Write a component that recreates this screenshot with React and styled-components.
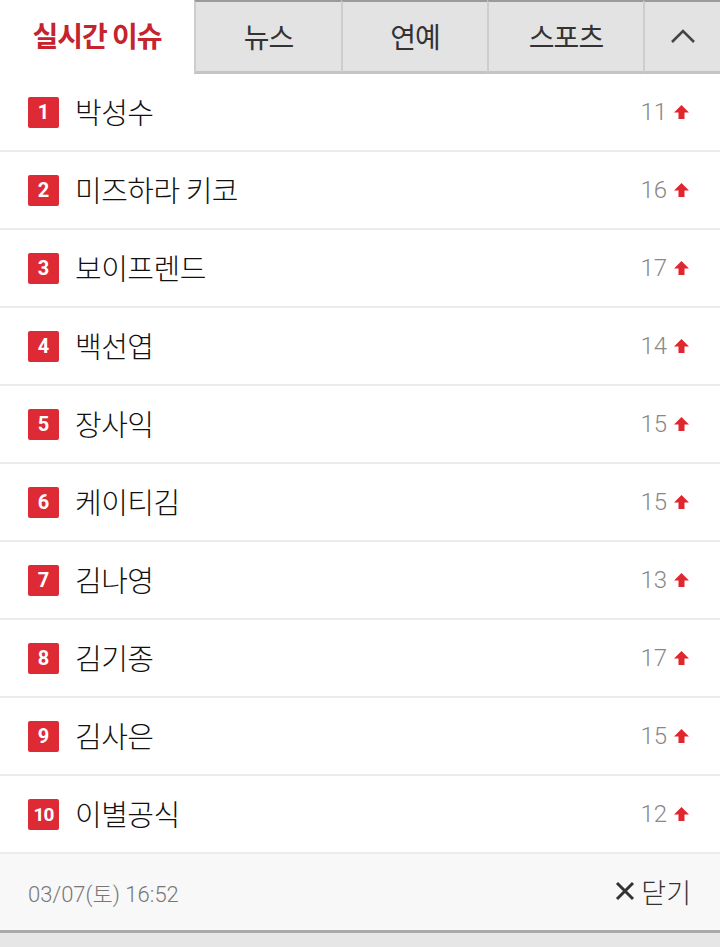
import React from 'react'
import styled, { createGlobalStyle } from 'styled-components'

const GlobalStyle = createGlobalStyle`
    html, body {
        margin: 0;
        padding: 0;
        background: #e6e6e6;
        font-family: "Noto Sans CJK KR", "Noto Sans", Roboto, sans-serif;
    }
`;

const Panel = styled.div`
    width: 720px;
    background: #fff;
    border-bottom: 3px solid #a9a9a9;
`;

const TabBar = styled.div`
    display: flex;
    height: 74px;
    box-sizing: border-box;
`;

const Tab = styled.div`
    display: flex;
    align-items: center;
    justify-content: center;
    width: ${p => p.w}px;
    box-sizing: border-box;
    padding-bottom: ${p => p.active ? 4 : 2}px;
    font-size: 28px;
    letter-spacing: -1px;
    color: ${p => p.active ? '#c5232d' : '#333'};
    font-weight: ${p => p.active ? 700 : 400};
    background: ${p => p.active ? '#fff' : '#e3e3e3'};
    border-top: ${p => p.active ? '0' : '2px solid #9a9a9a'};
    border-left: ${p => p.active ? '0' : '2px solid #cdcdcd'};
    border-bottom: ${p => p.active ? '0' : '3px solid #c4c4c4'};
    flex: ${p => p.grow ? 1 : 'none'};
`;

const List = styled.ol`
    list-style: none;
    margin: 0;
    padding: 0;
`;

const Row = styled.li`
    display: flex;
    align-items: center;
    height: 76px;
    padding: 0 30px 0 28px;
    border-bottom: 2px solid #ececec;
`;

const Badge = styled.span`
    display: flex;
    align-items: center;
    justify-content: center;
    width: 31px;
    height: 31px;
    border-radius: 2px;
    background: #dd2a35;
    color: #fff;
    font-family: Roboto, "Liberation Sans", sans-serif;
    font-weight: 700;
    font-size: ${p => p.small ? 19 : 20}px;
    letter-spacing: ${p => p.small ? '-1px' : '0'};
`;

const Keyword = styled.span`
    flex: 1;
    margin-left: 16px;
    padding-bottom: 3px;
    font-size: 29px;
    font-weight: 300;
    color: #111;
    letter-spacing: -0.5px;
`;

const Count = styled.span`
    display: flex;
    align-items: center;
    gap: 6px;
    font-family: Roboto, "Liberation Sans", sans-serif;
    font-weight: 300;
    font-size: 24px;
    color: #888;
`;

const Footer = styled.div`
    display: flex;
    align-items: center;
    justify-content: space-between;
    height: 76px;
    padding: 0 29px 0 28px;
    background: #f8f8f8;
`;

const Stamp = styled.span`
    font-family: Roboto, "Noto Sans CJK KR", sans-serif;
    font-size: 22px;
    font-weight: 300;
    color: #777;
`;

const Close = styled.span`
    display: flex;
    align-items: center;
    gap: 5px;
    padding-bottom: 2px;
    font-size: 27px;
    font-weight: 300;
    color: #333;
`;

const UpArrow = () => (
    <svg width="17" height="16" viewBox="0 0 17 16">
        <polygon points="8.5,1 16,8.5 11.5,8.5 11.5,15 5.5,15 5.5,8.5 1,8.5" fill="#e0262f" />
    </svg>
)

const Chevron = () => (
    <svg width="26" height="16" viewBox="0 0 26 16">
        <polyline points="2,14 13,3 24,14" fill="none" stroke="#444" strokeWidth="2.6" />
    </svg>
)

const Cross = () => (
    <svg width="22" height="22" viewBox="0 0 22 22">
        <path d="M3 3 L19 19 M19 3 L3 19" stroke="#333" strokeWidth="3" />
    </svg>
)

const items = [
    ['박성수', 11],
    ['미즈하라 키코', 16],
    ['보이프렌드', 17],
    ['백선엽', 14],
    ['장사익', 15],
    ['케이티김', 15],
    ['김나영', 13],
    ['김기종', 17],
    ['김사은', 15],
    ['이별공식', 12],
]

export default function App() {
    return (
        <>
            <GlobalStyle />
            <Panel>
                <TabBar>
                    <Tab active w={194}>실시간 이슈</Tab>
                    <Tab w={147}>뉴스</Tab>
                    <Tab w={146}>연예</Tab>
                    <Tab w={156}>스포츠</Tab>
                    <Tab grow><Chevron /></Tab>
                </TabBar>
                <List>
                    {items.map(([word, n], i) => (
                        <Row key={word}>
                            <Badge small={i === 9}>{i + 1}</Badge>
                            <Keyword>{word}</Keyword>
                            <Count>{n}<UpArrow /></Count>
                        </Row>
                    ))}
                </List>
                <Footer>
                    <Stamp>03/07(토) 16:52</Stamp>
                    <Close><Cross />닫기</Close>
                </Footer>
            </Panel>
        </>
    )
}
